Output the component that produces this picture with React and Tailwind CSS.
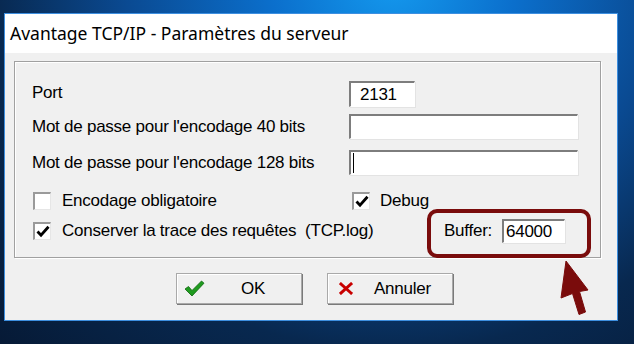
import React from "react";

function Sunken({ className = "", children }) {
  return (
    <div
      className={
        "flex items-center bg-white border-t-2 border-l-2 border-b border-r border-t-[#7d7d7d] border-l-[#7d7d7d] border-b-[#ffffff] border-r-[#ffffff] shadow-[1px_1px_0_#e3e3e3] " +
        className
      }
    >
      {children}
    </div>
  );
}

function CheckBox({ checked }) {
  return (
    <div className="w-[18px] h-[18px] shrink-0 bg-white border-t-2 border-l-2 border-b border-r border-t-[#9a9a9a] border-l-[#9a9a9a] border-b-[#e6e6e6] border-r-[#e6e6e6] flex items-center justify-center">
      {checked && (
        <svg width="14" height="13" viewBox="0 0 14 13">
          <path d="M1.5 6.5 L5 10.2 L12.5 1.8" fill="none" stroke="#000" strokeWidth="2.8" />
        </svg>
      )}
    </div>
  );
}

function Button({ children }) {
  return (
    <div className="w-[126px] h-[31px] bg-[#f0f0f0] border border-[#a9a9a9] shadow-[inset_1px_1px_0_#ffffff,1px_1px_0_#7a7a7a] flex items-center">
      {children}
    </div>
  );
}

export default function App() {
  const label = "text-[17px] tracking-[-0.25px] text-black leading-[20px]";
  return (
    <div
      className="relative w-[634px] h-[344px] overflow-hidden pt-[13px] pl-[4px] bg-[radial-gradient(ellipse_at_62%_-5%,#1499ee_0%,#0b6fcc_22%,#0a4a92_48%,#08284f_72%,#061a36_100%)]"
      style={{ fontFamily: '"Liberation Sans", Arial, sans-serif' }}
    >
      <div className="w-[614px] h-[308px] border border-[#3d8fe0] bg-[#f0f0f0] flex flex-col">
        <div className="h-[39px] bg-white flex items-center pl-[5px] shrink-0">
          <span
            className="text-[17.5px] text-black"
            style={{ fontFamily: '"Noto Sans", "Open Sans", sans-serif' }}
          >
            Avantage TCP/IP - Paramètres du serveur
          </span>
        </div>
        <div className="flex flex-col pt-[8px] pl-[9px]">
          <div className="w-[587px] h-[197px] border border-[#a0a0a0] shadow-[inset_1px_1px_0_#ffffff,1px_1px_0_#ffffff] pt-[19px] pl-[17px] flex flex-col">
            <div className="flex items-center h-[26px]">
              <div className={"w-[317px] -mt-[3px] " + label}>Port</div>
              <Sunken className="w-[66px] h-[26px] pl-[9px]">
                <span className={label}>2131</span>
              </Sunken>
            </div>
            <div className="flex items-center h-[25px] mt-[7px]">
              <div className={"w-[317px] " + label}>Mot de passe pour l'encodage 40 bits</div>
              <Sunken className="w-[229px] h-[25px]" />
            </div>
            <div className="flex items-center h-[25px] mt-[11px]">
              <div className={"w-[317px] " + label}>Mot de passe pour l'encodage 128 bits</div>
              <Sunken className="w-[229px] h-[25px] pl-[2px]">
                <span className="w-px h-[20px] bg-black" />
              </Sunken>
            </div>
            <div className="flex items-center h-[18px] mt-[17px]">
              <div className="w-[317px] flex items-center">
                <div className="ml-[1px]">
                  <CheckBox checked={false} />
                </div>
                <span className={"ml-[11px] " + label}>Encodage obligatoire</span>
              </div>
              <div className="ml-[3px]">
                <CheckBox checked={true} />
              </div>
              <span className={"ml-[10px] " + label}>Debug</span>
            </div>
            <div className="flex items-center h-[24px] mt-[9px]">
              <div className="w-[412px] flex items-center">
                <div className="ml-[1px]">
                  <CheckBox checked={true} />
                </div>
                <span className={"ml-[11px] whitespace-pre " + label}>
                  Conserver la trace des requêtes  (TCP.log)
                </span>
              </div>
              <div className="relative flex items-center h-[24px]">
                <span className={"w-[58px] " + label}>Buffer:</span>
                <Sunken className="w-[63px] h-[24px] pl-[2px]">
                  <span className={label}>64000</span>
                </Sunken>
                <div className="absolute left-[-17px] top-[-10px] w-[164px] h-[49px] border-4 border-[#7a0c0c] rounded-[10px] pointer-events-none" />
              </div>
            </div>
          </div>
          <div className="flex mt-[15px] ml-[162px] gap-[25px]">
            <Button>
              <svg className="ml-[7px]" width="21" height="17" viewBox="0 0 21 17">
                <path
                  d="M1 9 L4.5 6.5 L8 10.5 L17.5 1 L20 3.2 L8 16 Z"
                  fill="#1f9b1f"
                  stroke="#0d650d"
                  strokeWidth="0.8"
                  strokeLinejoin="round"
                />
              </svg>
              <span className={"ml-[36px] " + label}>OK</span>
            </Button>
            <Button>
              <svg className="ml-[11px]" width="14" height="13" viewBox="0 0 14 13">
                <path d="M2 2 L12 11 M12 2 L2 11" stroke="#c80000" strokeWidth="3" strokeLinecap="square" />
              </svg>
              <span className={"ml-[21px] " + label}>Annuler</span>
            </Button>
          </div>
        </div>
      </div>
      <svg className="absolute left-0 top-0 pointer-events-none" width="634" height="344" viewBox="0 0 634 344">
        <path
          d="M566 261 L588 290 L579.5 291.5 L585.5 312 L579 314.5 L572.5 293.5 L561 298 Z"
          fill="#7a0c0c"
          stroke="#7a0c0c"
          strokeWidth="1"
          strokeLinejoin="round"
        />
      </svg>
    </div>
  );
}
